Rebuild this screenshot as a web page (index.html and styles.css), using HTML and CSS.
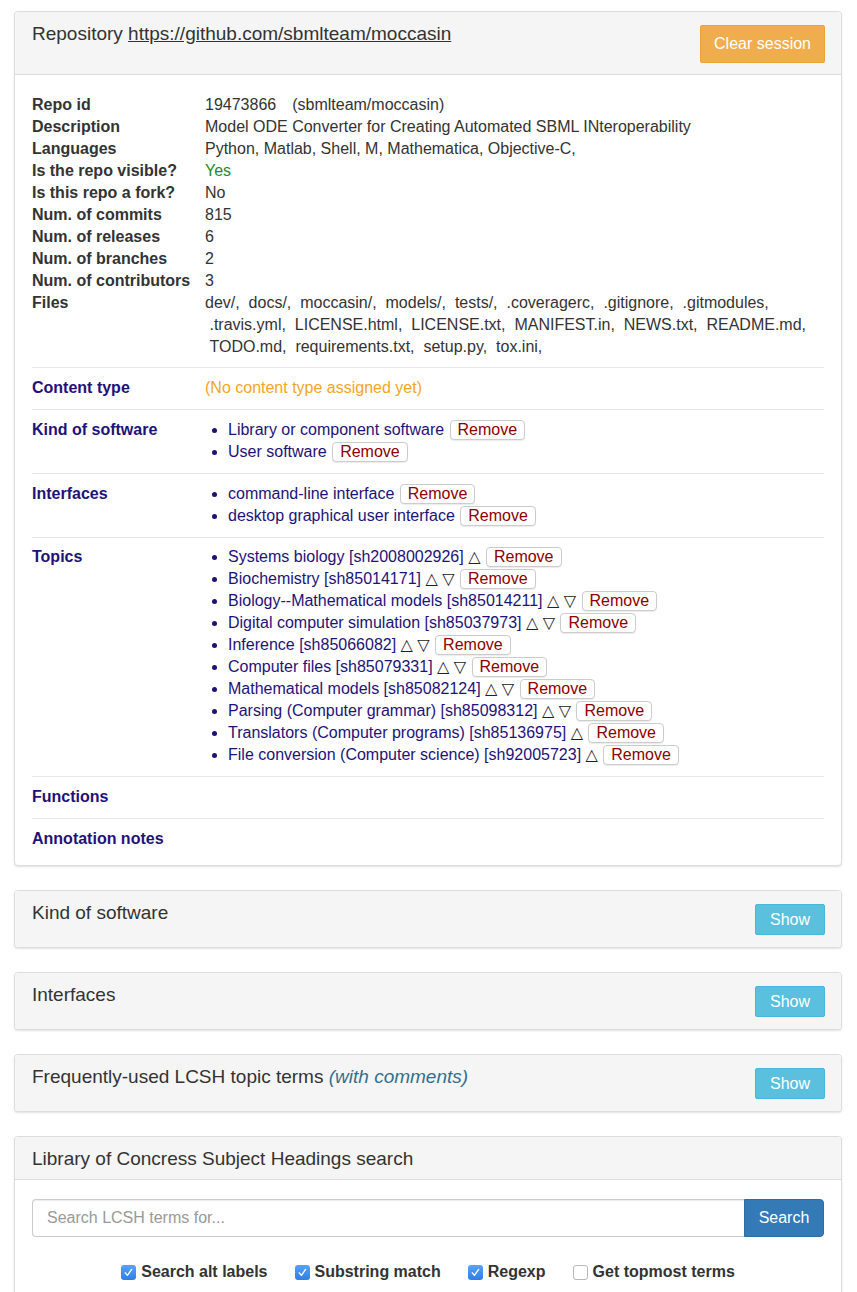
FILE: index.html
```html
<!DOCTYPE html>
<html>
<head>
<meta charset="utf-8">
<title>Repository moccasin</title>
<link rel="stylesheet" href="styles.css">
</head>
<body>
<div class="page">

  <div class="panel">
    <div class="panel-heading">
      <h3 class="panel-title">Repository <a href="#">https://github.com/sbmlteam/moccasin</a></h3>
      <button class="btn btn-warning">Clear session</button>
    </div>
    <div class="panel-body">
      <div class="details">
        <div class="dt">Repo id</div><div class="dd">19473866<span class="full-name">(sbmlteam/moccasin)</span></div>
        <div class="dt">Description</div><div class="dd">Model ODE Converter for Creating Automated SBML INteroperability</div>
        <div class="dt">Languages</div><div class="dd">Python, Matlab, Shell, M, Mathematica, Objective-C,</div>
        <div class="dt">Is the repo visible?</div><div class="dd yes">Yes</div>
        <div class="dt">Is this repo a fork?</div><div class="dd">No</div>
        <div class="dt">Num. of commits</div><div class="dd">815</div>
        <div class="dt">Num. of releases</div><div class="dd">6</div>
        <div class="dt">Num. of branches</div><div class="dd">2</div>
        <div class="dt">Num. of contributors</div><div class="dd">3</div>
        <div class="dt">Files</div><div class="dd files">dev/, &nbsp;docs/, &nbsp;moccasin/, &nbsp;models/, &nbsp;tests/, &nbsp;.coveragerc, &nbsp;.gitignore, &nbsp;.gitmodules, &nbsp;.travis.yml, &nbsp;LICENSE.html, &nbsp;LICENSE.txt, &nbsp;MANIFEST.in, &nbsp;NEWS.txt, &nbsp;README.md, &nbsp;TODO.md, &nbsp;requirements.txt, &nbsp;setup.py, &nbsp;tox.ini,</div>
      </div>

      <div class="ann-row">
        <div class="ann-label">Content type</div>
        <div class="ann-value pending">(No content type assigned yet)</div>
      </div>

      <div class="ann-row">
        <div class="ann-label">Kind of software</div>
        <ul class="ann-list">
          <li>Library or component software <button class="btn-remove">Remove</button></li>
          <li>User software <button class="btn-remove">Remove</button></li>
        </ul>
      </div>

      <div class="ann-row">
        <div class="ann-label">Interfaces</div>
        <ul class="ann-list">
          <li>command-line interface <button class="btn-remove">Remove</button></li>
          <li>desktop graphical user interface <button class="btn-remove">Remove</button></li>
        </ul>
      </div>

      <div class="ann-row topics">
        <div class="ann-label">Topics</div>
        <ul class="ann-list">
          <li>Systems biology [sh2008002926] <span class="arrow">△</span> <button class="btn-remove">Remove</button></li>
          <li>Biochemistry [sh85014171] <span class="arrow">△</span> <span class="arrow">▽</span> <button class="btn-remove">Remove</button></li>
          <li>Biology--Mathematical models [sh85014211] <span class="arrow">△</span> <span class="arrow">▽</span> <button class="btn-remove">Remove</button></li>
          <li>Digital computer simulation [sh85037973] <span class="arrow">△</span> <span class="arrow">▽</span> <button class="btn-remove">Remove</button></li>
          <li>Inference [sh85066082] <span class="arrow">△</span> <span class="arrow">▽</span> <button class="btn-remove">Remove</button></li>
          <li>Computer files [sh85079331] <span class="arrow">△</span> <span class="arrow">▽</span> <button class="btn-remove">Remove</button></li>
          <li>Mathematical models [sh85082124] <span class="arrow">△</span> <span class="arrow">▽</span> <button class="btn-remove">Remove</button></li>
          <li>Parsing (Computer grammar) [sh85098312] <span class="arrow">△</span> <span class="arrow">▽</span> <button class="btn-remove">Remove</button></li>
          <li>Translators (Computer programs) [sh85136975] <span class="arrow">△</span> <button class="btn-remove">Remove</button></li>
          <li>File conversion (Computer science) [sh92005723] <span class="arrow">△</span> <button class="btn-remove">Remove</button></li>
        </ul>
      </div>

      <div class="ann-row">
        <div class="ann-label">Functions</div>
      </div>

      <div class="ann-row">
        <div class="ann-label">Annotation notes</div>
      </div>
    </div>
  </div>

  <div class="panel collapsed">
    <div class="panel-heading">
      <h3 class="panel-title">Kind of software</h3>
      <button class="btn btn-info">Show</button>
    </div>
  </div>

  <div class="panel collapsed">
    <div class="panel-heading">
      <h3 class="panel-title">Interfaces</h3>
      <button class="btn btn-info">Show</button>
    </div>
  </div>

  <div class="panel collapsed">
    <div class="panel-heading">
      <h3 class="panel-title">Frequently-used LCSH topic terms <em class="note">(with comments)</em></h3>
      <button class="btn btn-info">Show</button>
    </div>
  </div>

  <div class="panel">
    <div class="panel-heading">
      <h3 class="panel-title">Library of Concress Subject Headings search</h3>
    </div>
    <div class="panel-body search-body">
      <div class="input-group">
        <input class="search-input" type="text" placeholder="Search LCSH terms for...">
        <button class="btn btn-primary">Search</button>
      </div>
      <div class="options">
        <label class="check"><span class="box checked"><svg viewBox="0 0 15 15" width="15" height="15"><path d="M4.3 7.8 L6.4 10.4 L10.6 4.4" fill="none" stroke="#fff" stroke-width="1.3" stroke-linecap="round" stroke-linejoin="round"/></svg></span>Search alt labels</label>
        <label class="check"><span class="box checked"><svg viewBox="0 0 15 15" width="15" height="15"><path d="M4.3 7.8 L6.4 10.4 L10.6 4.4" fill="none" stroke="#fff" stroke-width="1.3" stroke-linecap="round" stroke-linejoin="round"/></svg></span>Substring match</label>
        <label class="check"><span class="box checked"><svg viewBox="0 0 15 15" width="15" height="15"><path d="M4.3 7.8 L6.4 10.4 L10.6 4.4" fill="none" stroke="#fff" stroke-width="1.3" stroke-linecap="round" stroke-linejoin="round"/></svg></span>Regexp</label>
        <label class="check"><span class="box"></span>Get topmost terms</label>
      </div>
    </div>
  </div>

</div>
</body>
</html>
```

FILE: styles.css
```css
* { box-sizing: border-box; }

html, body {
  margin: 0;
  padding: 0;
  background: #fff;
}

body {
  font-family: "Liberation Sans", Arial, "Helvetica Neue", sans-serif;
  font-size: 16px;
  line-height: 22px;
  color: #333;
}

.page {
  padding: 11px 15px 0 14px;
}

.panel {
  border: 1px solid #ddd;
  border-radius: 4px;
  background: #fff;
  box-shadow: 0 1px 2px rgba(0, 0, 0, 0.12);
  margin-bottom: 24px;
  overflow: hidden;
}

.panel-heading {
  background: #f5f5f5;
  border-bottom: 1px solid #ddd;
  padding: 13px 16px 11px 17px;
  display: flex;
  justify-content: space-between;
  align-items: flex-start;
  min-height: 42px;
}

.panel.collapsed .panel-heading {
  border-bottom: none;
  padding-bottom: 12px;
}

.panel-title {
  margin: 0;
  font-size: 19px;
  line-height: 18px;
  font-weight: normal;
  color: #333;
}

.panel-title a {
  color: #333;
  text-decoration: underline;
}

.note {
  color: #31708f;
}

.btn {
  font-family: inherit;
  font-size: 16px;
  border: 1px solid transparent;
  border-radius: 2px;
  color: #fff;
  cursor: pointer;
}

.btn-warning {
  background: #f0ad4e;
  border-color: #eea236;
  height: 38px;
  padding: 0 13px;
}

.btn-info {
  background: #5bc0de;
  border-color: #46b8da;
  height: 31px;
  width: 70px;
  padding: 0;
}

.btn-primary {
  background: #337ab7;
  border-color: #2e6da4;
  height: 38px;
  width: 80px;
  padding: 0;
  border-radius: 0 4px 4px 0;
}

.panel-body {
  padding: 19px 17px 5px 17px;
}

.details {
  display: grid;
  grid-template-columns: 173px 1fr;
  padding-bottom: 9px;
}

.dt {
  font-weight: bold;
}

.full-name {
  margin-left: 16px;
}

.yes {
  color: #228b22;
}

.files {
  padding-right: 10px;
}

.ann-row {
  display: grid;
  grid-template-columns: 173px 1fr;
  border-top: 1px solid #e8e8e8;
  padding: 9px 0 10px;
  min-height: 42px;
}

.ann-row.topics {
  padding-top: 8px;
  padding-bottom: 10px;
}

.ann-label {
  font-weight: bold;
  color: #1e1278;
}

.ann-value.pending {
  color: #f5a623;
}

.ann-list {
  margin: 0;
  padding: 0 0 0 23px;
  color: #1e1278;
}

.ann-list li {
  line-height: 22px;
}

.arrow {
  color: #222;
  font-family: "DejaVu Sans", sans-serif;
  font-size: 16px;
  line-height: 18px;
}

.btn-remove {
  font-family: inherit;
  font-size: 16px;
  line-height: 18px;
  height: 20px;
  padding: 0 7px;
  color: #8b0000;
  background: #fff;
  border: 1px solid #ccc;
  border-radius: 4px;
  box-shadow: 0 1px 1px rgba(0, 0, 0, 0.08);
  vertical-align: 0;
  margin-left: 1px;
}

.search-body {
  padding: 19px 17px 20px 17px;
}

.input-group {
  display: flex;
}

.search-input {
  flex: 1;
  height: 38px;
  border: 1px solid #ccc;
  border-right: none;
  border-radius: 4px 0 0 4px;
  padding: 0 14px;
  font-family: inherit;
  font-size: 16px;
  color: #333;
  box-shadow: inset 0 1px 1px rgba(0, 0, 0, 0.075);
}

.search-input::placeholder {
  color: #999;
}

.options {
  display: flex;
  justify-content: center;
  gap: 27px;
  margin-top: 24px;
}

.check {
  display: flex;
  align-items: center;
  font-weight: bold;
  color: #333;
}

.box {
  width: 15px;
  height: 15px;
  border-radius: 3px;
  margin-right: 5px;
  border: 1px solid #b8b8b8;
  background: #fff;
  display: inline-block;
  position: relative;
}

.box.checked {
  border: none;
  background: linear-gradient(#59a2f7, #2f7ee6);
}

.box svg {
  display: block;
}
```
